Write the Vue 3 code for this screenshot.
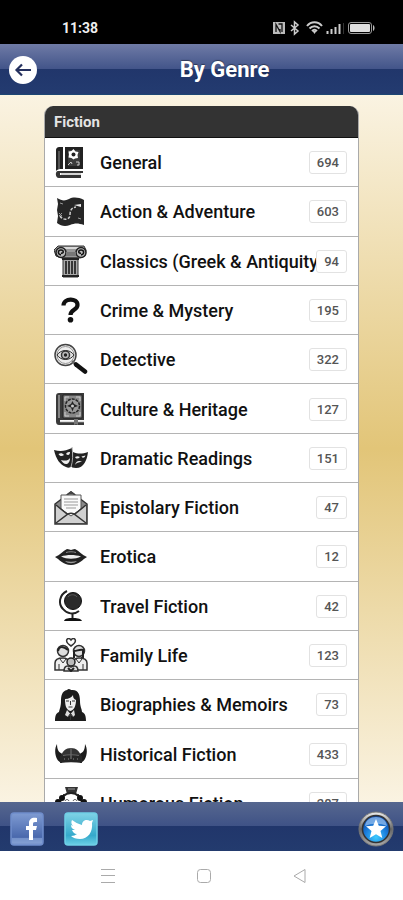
<script setup>
const icons = {
  general: `
    <path d="M6 1h3v22H6c-2 0-3 1-4 2V5c0-3 1-4 4-4z" fill="#222"/>
    <path d="M5 5v18" stroke="#888" stroke-width="1"/>
    <path d="M11 1h18v22H11z" fill="#222"/>
    <path d="M14 4h12v16H14z" fill="#3c3c3c"/>
    <path d="M19.500 3l2 2.500 3 .5-1 3 .5 3-3 .5-1.500 1-2-1.500-3-.5.5-3-.5-3 3-.5z" fill="#fff"/>
    <circle cx="19.500" cy="8.500" r="2" fill="#222"/>
    <path d="M14 19l3-3 1 2M22 16h3v3h-2" stroke="#ccc" fill="none"/>
    <path d="M4 25h25v2H6v2h21v3H5c-4 0-4-7-1-7z" fill="#333"/>
    <path d="M7 28h20" stroke="#aaa"/>`,
  map: `
    <path d="M3 3c5 3 8 3 12 1s9-2 15 1v25c-6-2-9-2-14 0s-9 1-13-2l1-7-1-6 1-6z" fill="#262626"/>
    <path d="M6 21c3 5 10 4 10-1 0-4 1-7 6-8" stroke="#ccc" stroke-width="1.500" stroke-dasharray="3 1.500" fill="none"/>
    <path d="M20 10l7-1v3z" fill="#eee"/>
    <path d="M5 18l3 3m0-3l-3 3M6 8l3 1M24 23l3 1" stroke="#999" stroke-width="1"/>`,
  column: `
    <path d="M4 2h26l2 4-1 6-5 2H8l-6-2-2-6z" fill="#999" stroke="#333"/>
    <path d="M4 4h26" stroke="#eee" stroke-width="1.500"/>
    <circle cx="7" cy="8.500" r="5" fill="#bbb" stroke="#222" stroke-width="1.500"/>
    <circle cx="27" cy="8.500" r="5" fill="#bbb" stroke="#222" stroke-width="1.500"/>
    <path d="M7 11c-4-1-3-5 0-5s3 4 0 3M27 11c4-1 3-5 0-5s-3 4 0 3" fill="none" stroke="#111" stroke-width="1.500"/>
    <path d="M12 8h10v4H12z" fill="#777"/>
    <path d="M9 14h15v19H9z" fill="#aaa" stroke="#333"/>
    <path d="M12 17v13M15 17v13M18 17v13M21 17v13" stroke="#111" stroke-width="1.500"/>
    <path d="M8 15h17M8 32h17" stroke="#222" stroke-width="2"/>`,
  question: `
    <path d="M9.500 12.500C9.500 5 23.500 4.500 23.500 12c0 5-7 4.500-7 10" fill="none" stroke="#111" stroke-width="4.200"/>
    <circle cx="16.500" cy="26.800" r="2.800" fill="#111"/>`,
  lens: `
    <circle cx="11.500" cy="12" r="10.500" fill="#eee" stroke="#444" stroke-width="1.500"/>
    <circle cx="11.500" cy="12" r="8.500" fill="none" stroke="#999"/>
    <path d="M3 12c4-6 13-6 17 0-4 6-13 6-17 0z" fill="#ddd" stroke="#333"/>
    <circle cx="11.500" cy="12" r="4" fill="#bbb" stroke="#333" stroke-width="1.500"/>
    <circle cx="11.500" cy="12" r="1.700" fill="#222"/>
    <path d="M18 18l4 4" stroke="#666" stroke-width="2"/>
    <path d="M22 21.500l9 7" stroke="#111" stroke-width="4.500" stroke-linecap="round"/>`,
  tome: `
    <path d="M5 1h25v27H6v2h24v3H5c-3 0-3-3-3-5V4c0-2 1-3 3-3z" fill="#3a3a3a"/>
    <path d="M9 3h19v23H9z" fill="#888" stroke="#222"/>
    <path d="M5 3v23M11 5h4M11 5v4M26 5h-4M26 5v4M11 24h4M11 24v-4M26 24h-4M26 24v-4" stroke="#ccc" fill="none"/>
    <circle cx="18.500" cy="14" r="7" fill="#999" stroke="#222" stroke-width="1.500" stroke-dasharray="3 1"/>
    <path d="M18.500 9l1.500 3 4 2-4 1.500-1.500 4-1.500-4-4-1.500 4-2z" fill="#222"/>
    <circle cx="18.500" cy="14" r="1.500" fill="#ccc"/>
    <path d="M6 29.500h24" stroke="#ddd" stroke-width="1.500"/>
    <path d="M20 27h4v6l-2-1-2 1z" fill="#777"/>`,
  masks: `
    <path d="M0 9c7 2 11 1 18-2v18c-2 2-4 2-6 1C6 24 2 18 0 9z" fill="#222"/>
    <path d="M19 11c5 2 9 2 15 0-1 8-4 16-12 16-3 0-5-1-5-2z" fill="#222"/>
    <path d="M4.500 13c2-1 4-1 5.500 1-2 1.500-4 1.500-5.500-1zM12 13c1-2 3-2 4-2 0 3-2 4-4 2zM7 19c4 1 7 1 9-2 0 4-2 6-4 6s-4-2-5-4z" fill="#eee"/>
    <path d="M21 16c2-1 3-1 5 0-2 2-4 2-5 0zM27.500 15.500l4-1c-1 2.500-3 3-4 1zM21 24c1-4 4-5 7-3-2 0-5 0-7 3z" fill="#eee"/>
    <path d="M18 6c1 7 1 14-1 20" stroke="#aaa" fill="none"/>`,
  letter: `
    <path d="M1 13L17 1l16 12v20H1z" fill="#888" stroke="#333" stroke-width="1.500"/>
    <path d="M2 14l15 11 15-11v18H2z" fill="#d0d0d0"/>
    <path d="M7 4h20v14l-10 7-10-7z" fill="#fafafa" stroke="#555"/>
    <path d="M10 8h14M10 11h14M10 14h14M12 17h10" stroke="#999"/>
    <path d="M2 14l11 9M32 14l-11 9M2 32l12-9c2-1 4-1 6 0l12 9" fill="none" stroke="#333" stroke-width="1.500"/>
    <path d="M13 3l4-3 4 3z" fill="#444"/>`,
  lips: `
    <path d="M1 17c5-2 8-6 12-8 2 0 3 1 4 1s2-1 4-1c4 2 7 6 12 8-4 2-8 8-16 8S5 19 1 17z" fill="#222"/>
    <path d="M7 16.500c6-2 14-2 20 0-6 3-14 3-20 0z" fill="#eee"/>
    <path d="M12 12.500c3-1 7-1 10 0" fill="none" stroke="#888"/>
    <path d="M11 21c4 1 8 1 12 0-3 3-9 3-12 0z" fill="#999"/>`,
  globe: `
    <circle cx="19" cy="12" r="8.500" fill="#2b2b2b" stroke="#111"/>
    <path d="M13 2C5 6 4 15 9 20c4 5 11 6 16 2" fill="none" stroke="#222" stroke-width="2"/>
    <path d="M18.500 24v6" stroke="#222" stroke-width="2"/>
    <path d="M10 32c1-3 5-3 8.500-3s8 0 9.500 3z" fill="#111"/>
    <path d="M14 8c2-3 7-3 9 0" stroke="#555" fill="none"/>`,
  family: `
    <path d="M17 8c-8-5-3-10 0-6 3-4 8 1 0 6z" fill="#fff" stroke="#333" stroke-width="1.500"/>
    <circle cx="9" cy="13" r="5.500" fill="#ddd" stroke="#333" stroke-width="1.500"/>
    <circle cx="25" cy="13" r="5.500" fill="#ddd" stroke="#333" stroke-width="1.500"/>
    <path d="M4 13c1-5 5-5 10-1M20 13c3 0 6-2 9-1v8h-2M20 13v7" fill="none" stroke="#222" stroke-width="2"/>
    <path d="M1 32v-7c0-4 4-5 8-5s6 2 8 5c2-3 4-5 8-5s8 1 8 5v7z" fill="#eee" stroke="#333" stroke-width="1.500"/>
    <path d="M6 21l3 4 3-4M22 21l3 4 3-4M5 26v6M29 26v6" fill="none" stroke="#333"/>
    <circle cx="17" cy="24" r="4" fill="#bbb" stroke="#222" stroke-width="1.500"/>
    <path d="M10 33c0-5 3-6 7-4 4-2 7-1 7 4z" fill="#ddd" stroke="#333" stroke-width="1.500"/>
    <path d="M14 30l3 3 3-3" stroke="#222" stroke-width="2" fill="none"/>`,
  portrait: `
    <path d="M13 2c2-2 4 0 4 0 8-1 9 6 9 11 0 6 2 8 2 11 3 1 4 4 4 9H1c0-5 1-8 4-9 1-4 2-6 2-11 0-5 1-10 6-11z" fill="#1c1c1c"/>
    <path d="M11 11c4 0 7-2 8-4 0 3 1 4 3 5 0 6-2 10-5.500 11C12 22 11 17 11 11z" fill="#eee"/>
    <path d="M12 13h3M18 13h3M14.500 19h4M16.500 13v4" stroke="#333" fill="none"/>
    <path d="M13 22l3.500 4 3.500-4 1 5-2 2-2.500-3-2.500 3-3-2z" fill="#ddd"/>
    <path d="M16.500 25v7M14 29l2-3M19 29l-2-3" stroke="#333"/>`,
  helmet: `
    <path d="M3 7c0 6 2 9 6 10l-1 9c-6-1-9-12-5-19zM31 7c0 6-2 9-6 10l1 9c6-1 9-12 5-19z" fill="#1c1c1c"/>
    <path d="M7 20c1-6 5-9 10-9s9 3 10 9z" fill="#333"/>
    <path d="M6 19c7-2 15-2 22 0v7c-7-1-15-1-22 0z" fill="#262626"/>
    <path d="M16 11h2v11h-2z" fill="#555"/>
    <path d="M9 18.500c5-1 11-1 16 0" fill="none" stroke="#666"/>
    <path d="M10 22h1M14 22h1M19 22h1M23 22h1" stroke="#888"/>`,
  clown: `
    <path d="M11 1h13l-2 7H13z" fill="#333"/>
    <path d="M14 3h7" stroke="#999"/>
    <path d="M9 8c5 2 11 2 16 0v3H9z" fill="#111"/>
    <circle cx="17" cy="18" r="11" fill="#fff" stroke="#222" stroke-width="2"/>
    <g fill="#111"><circle cx="8" cy="12" r="3"/><circle cx="26" cy="12" r="3"/><circle cx="4" cy="16" r="3"/><circle cx="30" cy="16" r="3"/></g>
    <path d="M11 15c1-2 3-2 4 0M19 15c1-2 3-2 4 0" stroke="#444" fill="none"/>`,
};

const genres = [
  { icon: 'general', label: 'General', count: 694 },
  { icon: 'map', label: 'Action & Adventure', count: 603 },
  { icon: 'column', label: 'Classics (Greek & Antiquity)', count: 94 },
  { icon: 'question', label: 'Crime & Mystery', count: 195 },
  { icon: 'lens', label: 'Detective', count: 322 },
  { icon: 'tome', label: 'Culture & Heritage', count: 127 },
  { icon: 'masks', label: 'Dramatic Readings', count: 151 },
  { icon: 'letter', label: 'Epistolary Fiction', count: 47 },
  { icon: 'lips', label: 'Erotica', count: 12 },
  { icon: 'globe', label: 'Travel Fiction', count: 42 },
  { icon: 'family', label: 'Family Life', count: 123 },
  { icon: 'portrait', label: 'Biographies & Memoirs', count: 73 },
  { icon: 'helmet', label: 'Historical Fiction', count: 433 },
  { icon: 'clown', label: 'Humorous Fiction', count: 287 },
];
</script>

<template>
  <div class="screen">
    <div class="status-bar">
      <span class="time">11:38</span>
      <svg class="status-icons" width="104" height="16" viewBox="0 0 104 16" fill="none" stroke="#ccc">
        <path d="M0 2h12v12H0z" fill="#bbb" stroke="none" />
        <path d="M3 12V4.500l4 7V9M5.500 4h3.500v8" stroke="#111" stroke-width="1.300" />
        <path d="M18 5l7 6-3.500 3V2L25 5l-7 6" stroke-width="1.500" />
        <path d="M34 6c4-5 11-5 15 0M36.500 8.500c3-3 7-3 10 0M39 11c1.500-1.500 3.500-1.500 5 0" stroke-width="2" />
        <path d="M39.500 11h4l-2 3z" fill="#ccc" stroke="none" />
        <path d="M54.500 14v-3M58.500 14v-5M62.500 14V7M66.500 14V4" stroke-width="2" />
        <path d="M70.500 14V3" stroke="#333" stroke-width="1" />
        <rect x="75.500" y="2.500" width="23" height="11" rx="2.500" stroke="#999" />
        <rect x="77" y="4" width="20" height="8" rx="1" fill="#ddd" stroke="none" />
        <path d="M100 5c2 1 2 5 0 6z" fill="#bbb" stroke="none" />
      </svg>
    </div>

    <header class="title-bar">
      <button class="back-button" type="button" aria-label="Back">
        <svg width="28" height="28" viewBox="0 0 28 28">
          <circle cx="14" cy="14" r="14" fill="#fff" />
          <path d="M22 14H8M13 8.500L7.500 14l5.500 5.500" fill="none" stroke="#25315f" stroke-width="2.200" />
        </svg>
      </button>
      <h1 class="title">By Genre</h1>
    </header>

    <main class="content">
      <section class="card">
        <h2 class="card-header">Fiction</h2>
        <ul class="genre-list">
          <li v-for="genre in genres" :key="genre.label" class="genre-item">
            <a href="#" class="genre-link">
              <svg class="genre-icon" width="34" height="34" viewBox="0 0 34 34" v-html="icons[genre.icon]"></svg>
              <span class="genre-label">{{ genre.label }}</span>
              <span class="genre-count">{{ genre.count }}</span>
            </a>
          </li>
        </ul>
      </section>
    </main>

    <footer class="bottom-bar">
      <a href="#" class="bottom-link" aria-label="Facebook">
        <svg width="34" height="34" viewBox="0 0 34 34">
          <defs>
            <linearGradient id="fb" x1="0" y1="0" x2="0" y2="1">
              <stop offset="0" stop-color="#7f9bd2" />
              <stop offset="0.750" stop-color="#4a69ad" />
              <stop offset="1" stop-color="#86a2d5" />
            </linearGradient>
          </defs>
          <rect x="1" y="1" width="32" height="32" rx="3" fill="url(#fb)" stroke="#6f8dcb" stroke-width="1.500" />
          <path d="M2 26h30v5H2z" fill="#8ba6d8" opacity="0.600" />
          <path d="M19 28V18h-3v-4h3v-3c0-4 3-6 8-5v4c-3 0-4 0-4 2v2h4l-1 4h-3v10z" fill="#fff" />
        </svg>
      </a>
      <a href="#" class="bottom-link" aria-label="Twitter">
        <svg width="34" height="34" viewBox="0 0 34 34">
          <defs>
            <linearGradient id="tw" x1="0" y1="0" x2="0" y2="1">
              <stop offset="0" stop-color="#7fd3e6" />
              <stop offset="0.700" stop-color="#35a9cb" />
              <stop offset="1" stop-color="#6cd0e6" />
            </linearGradient>
          </defs>
          <rect x="1" y="1" width="32" height="32" rx="3" fill="url(#tw)" stroke="#6fcfe6" stroke-width="1.500" />
          <path d="M8 8c3 2 6 4 10 5 0-5 5-6 8-4l3-1-1 3c1 9-4 16-12 16-4 0-7-1-9-3 3 0 4-1 6-2-3 0-4-2-5-4h3c-3-1-4-3-4-5l2 1c-2-2-2-4-1-6z" fill="#fff" />
        </svg>
      </a>
      <button class="favorite-button" type="button" aria-label="Favorites">
        <svg width="36" height="36" viewBox="0 0 36 36">
          <defs>
            <linearGradient id="ring" x1="0" y1="0" x2="0" y2="1">
              <stop offset="0" stop-color="#eee" />
              <stop offset="0.500" stop-color="#666" />
              <stop offset="1" stop-color="#aaa" />
            </linearGradient>
            <radialGradient id="orb" cx="0.500" cy="0.800" r="0.800">
              <stop offset="0" stop-color="#3ecbff" />
              <stop offset="0.500" stop-color="#1b7fdc" />
              <stop offset="1" stop-color="#0a3fa0" />
            </radialGradient>
          </defs>
          <circle cx="18" cy="18" r="17" fill="url(#ring)" stroke="#777" />
          <circle cx="18" cy="18" r="13.500" fill="url(#orb)" stroke="#333" stroke-width="1.500" />
          <path d="M7 15c1-12 21-12 22 0-7-3-15-3-22 0z" fill="#9cc8f4" opacity="0.700" />
          <path d="M18 8l2.800 6.700 7.200.5-5.500 4.700 1.800 7.100L18 23.200 11.700 27l1.800-7.100L8 15.200l7.200-.5z" fill="#fff" />
        </svg>
      </button>
    </footer>

    <nav class="system-nav">
      <button type="button" aria-label="Recent apps">
        <svg width="16" height="16" viewBox="0 0 16 16" stroke="#aaa">
          <path d="M1 1.500h14M1 7.500h14M1 14.500h14" />
        </svg>
      </button>
      <button type="button" aria-label="Home">
        <svg width="16" height="16" viewBox="0 0 16 16" fill="none" stroke="#aaa">
          <rect x="1.500" y="1.500" width="13" height="13" rx="3" />
        </svg>
      </button>
      <button type="button" aria-label="Back">
        <svg width="16" height="16" viewBox="0 0 16 16" fill="none" stroke="#aaa">
          <path d="M2 8l11-6.500v13z" stroke-linejoin="round" />
        </svg>
      </button>
    </nav>
  </div>
</template>

<style>
body {
  margin: 0;
}
</style>

<style scoped>
.screen {
  display: flex;
  flex-direction: column;
  height: 100vh;
  font-family: Roboto, "Liberation Sans", sans-serif;
  color: #111;
}

button {
  display: flex;
  padding: 0;
  border: 0;
  background: none;
  cursor: pointer;
}

svg {
  display: block;
  flex: none;
}

/* Phone status bar */
.status-bar {
  flex: none;
  display: flex;
  align-items: center;
  justify-content: space-between;
  box-sizing: border-box;
  height: 44px;
  padding: 11px 26px 0 62px;
  background: #000;
}

.time {
  font-size: 14px;
  font-weight: 700;
  color: #eee;
}

.title-bar {
  flex: none;
  display: flex;
  align-items: center;
  gap: 9px;
  box-sizing: border-box;
  height: 51px;
  padding: 1px 0 0 9px;
  border-bottom: 1px solid #1c4673;
  background: linear-gradient(#6f7ba6 0, #43558a 49%, #21366b 50%, #233b70 100%);
}

.title {
  flex: 1;
  margin: 0;
  font-size: 22px;
  font-weight: 700;
  text-align: center;
  color: #fff;
  text-shadow: 0 -1px 1px rgba(0, 0, 0, 0.4);
}

.content {
  flex: 1;
  min-height: 0;
  overflow: hidden;
  padding: 11px 44px 0;
  background: linear-gradient(#faf3e2 0, #e2c578 50%, #faf3e2 100%);
}

/* Genre card */
.card {
  border: 1px solid #aaa;
  border-top: 0;
  border-radius: 9px 9px 0 0;
  overflow: hidden;
  background: #fff;
}

.card-header {
  box-sizing: border-box;
  height: 32px;
  margin: 0;
  padding: 0 9px;
  border-bottom: 1px solid #111;
  background: #333;
  font-size: 15px;
  font-weight: 700;
  line-height: 32px;
  color: #e4e4e4;
}

.genre-list {
  display: grid;
  grid-template-columns: minmax(0, 1fr);
  grid-auto-rows: 1fr;
  min-height: 690px;
  margin: 0;
  padding: 0;
  list-style: none;
}

.genre-item {
  display: flex;
  border-bottom: 1px solid #b4b4b4;
}

.genre-link {
  flex: 1;
  display: flex;
  align-items: center;
  min-width: 0;
  padding: 1px 11px 0 9px;
  color: inherit;
  text-decoration: none;
}

.genre-icon {
  margin-right: 12px;
}

.genre-label {
  flex: 1;
  min-width: 0;
  overflow: hidden;
  white-space: nowrap;
  font-size: 18px;
  font-weight: 500;
}

.genre-count {
  flex: none;
  padding: 0 7px;
  border: 1px solid #e2e2e2;
  border-radius: 3px;
  font-size: 13px;
  font-weight: 500;
  line-height: 21px;
  color: #555;
}

/* Footer with social links */
.bottom-bar {
  flex: none;
  display: flex;
  align-items: center;
  gap: 20px;
  box-sizing: border-box;
  height: 49px;
  padding: 4px 9px 0 10px;
  background: linear-gradient(#56678f 0, #3f5286 49%, #21366b 50%, #233b6e 100%);
}

.favorite-button {
  margin-left: auto;
}

.system-nav {
  flex: none;
  display: flex;
  align-items: center;
  justify-content: center;
  gap: 80px;
  height: 49px;
  padding-left: 4px;
  background: #fff;
}
</style>
